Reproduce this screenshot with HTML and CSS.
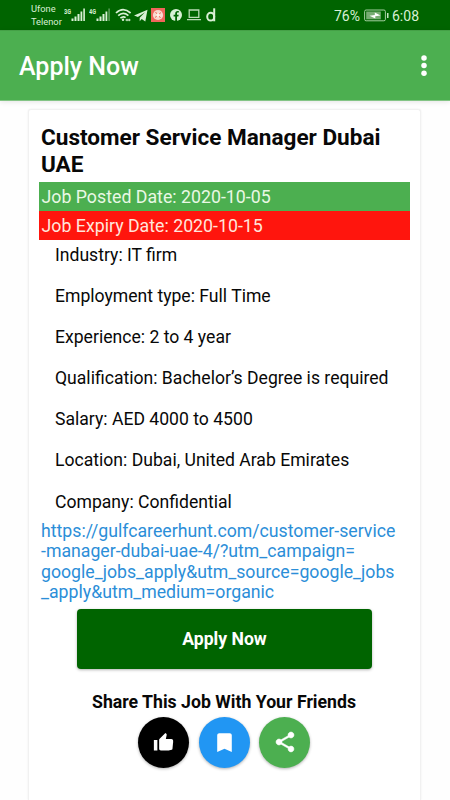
FILE: index.html
```html
<!DOCTYPE html>
<html lang="en">
<head>
<meta charset="utf-8">
<meta name="viewport" content="width=device-width, initial-scale=1">
<title>Apply Now</title>
<link rel="stylesheet" href="styles.css">
</head>
<body>
<div class="status">
  <div class="carriers"><span>Ufone</span><span>Telenor</span></div>
  <svg class="signal" width="22" height="16" viewBox="0 0 22 16" aria-hidden="true"><text x="0" y="6.6" class="net" textLength="7" lengthAdjust="spacingAndGlyphs">3G</text><path d="M7.500 11.500h2V14h-2zM10.500 9.500h2V14h-2zM13.500 7h2v7h-2zM16.500 4.500h1.800v9.500h-1.800zM19.300 1.500h1.600V14h-1.600z"/></svg>
  <svg class="signal second" width="22" height="16" viewBox="0 0 22 16" aria-hidden="true"><text x="0" y="6.6" class="net" textLength="7" lengthAdjust="spacingAndGlyphs">4G</text><path d="M7.500 11.500h2V14h-2zM10.500 9.500h2V14h-2zM13.500 7h2v7h-2zM16.500 4.500h1.800v9.500h-1.800z"/><path class="dim" d="M19.300 1.500h1.600V14h-1.600z"/></svg>
  <svg class="wifi" width="17" height="14" viewBox="0 0 17 14" aria-hidden="true"><path d="M1 5Q8-1.800 15.600 5M3.200 7.700Q8.200 3.200 13.400 7.700M5.400 10.200Q8.200 7.800 10.600 9.600"/><circle cx="8" cy="11.800" r="1.200"/><path class="arrows" d="M10.500 12h5M12 10.800v2.400M14.200 10.800v2.400"/></svg>
  <svg class="telegram" width="14" height="13" viewBox="0 0 14 13" aria-hidden="true"><path d="M13.500.7 0 6.500l3.900 1.600L11 3.300 5.700 8.800v3.400l2-2.100 3.600 2.400z"/></svg>
  <svg class="app" width="14" height="14" viewBox="0 0 14 14" aria-hidden="true"><rect width="14" height="14" fill="#ef665b"/><circle cx="7" cy="7" r="5.100" fill="#f9d9ce"/><path d="M4.500 4l2 2.500M10 4.500L7.500 6.500M4 9.500l2.500-2M9.500 10L8 8" stroke="#ef665b" stroke-width="1"/><circle cx="7" cy="7" r="1.700" fill="#fff3ea"/></svg>
  <svg class="facebook" width="12" height="12" viewBox="0 0 12 12" aria-hidden="true"><circle cx="6" cy="6" r="6"/><path class="cut" d="M5.200 12V7.600H3.600V5.800h1.600V4.600c0-1.700 1-2.600 2.500-2.600h1.100v1.600h-.9c-.7 0-.9.4-.9.900v1.300h1.700l-.3 1.800H7V12z"/></svg>
  <svg class="laptop" width="14" height="12" viewBox="0 0 14 12" aria-hidden="true"><path d="M2.200 1h9.600v7.400H2.200zM0 10.600h14"/></svg>
  <svg class="dlogo" width="10" height="14" viewBox="0 0 10 14" aria-hidden="true"><ellipse cx="4.700" cy="8.700" rx="3.500" ry="3.900"/><path d="M8.200.3V13.300"/></svg>
  <div class="right">
    <span class="percent">76%</span>
    <svg class="battery" width="25" height="13" viewBox="0 0 25 13" aria-hidden="true"><rect x=".6" y="1" width="20.800" height="10.800" rx="1.500" fill="none" stroke="#a4cea0"/><path d="M2.200 2.500h14.600v7.800H2.200z" fill="#77ad73"/><path d="M5.500 6.800l5.300-.7V3.600l5.700 2.800-5.200.9v2.200z" fill="#fff"/><path d="M23 4h1.500v5H23z" fill="#c4e3c0"/></svg>
    <span class="clock">6:08</span>
  </div>
</div>
<header class="appbar">
  <h1>Apply Now</h1>
  <svg width="6" height="22" viewBox="0 0 6 22" role="img" aria-label="Menu"><circle cx="3" cy="3" r="2.750"/><circle cx="3" cy="10.600" r="2.750"/><circle cx="3" cy="18.200" r="2.750"/></svg>
</header>
<main class="card">
  <h2>Customer Service Manager Dubai UAE</h2>
  <p class="date posted">Job Posted Date: 2020-10-05</p>
  <p class="date expiry">Job Expiry Date: 2020-10-15</p>
  <ul class="details">
    <li>Industry: IT firm</li>
    <li>Employment type: Full Time</li>
    <li>Experience: 2 to 4 year</li>
    <li>Qualification: Bachelor’s Degree is required</li>
    <li>Salary: AED 4000 to 4500</li>
    <li>Location: Dubai, United Arab Emirates</li>
    <li>Company: Confidential</li>
  </ul>
  <a class="link">https://gulfcareerhunt.com/customer-service<br>-manager-dubai-uae-4/?utm_campaign=<br>google_jobs_apply&amp;utm_source=google_jobs<br>_apply&amp;utm_medium=organic</a>
  <button class="apply">Apply Now</button>
  <h3>Share This Job With Your Friends</h3>
  <div class="actions">
    <button class="round like" aria-label="Like"><svg width="21" height="21" viewBox="0 0 24 24"><path d="M1 21h4V9H1v12zm22-11c0-1.100-.9-2-2-2h-6.310l.95-4.570.03-.32c0-.41-.17-.79-.44-1.060L14.170 1 7.590 7.590C7.220 7.950 7 8.450 7 9v10c0 1.100.9 2 2 2h9c.83 0 3.700-.2 4.200-1.220l.66-7.050c.09-.23.14-.47.14-.73v-2z"/></svg></button>
    <button class="round save" aria-label="Save"><svg width="25" height="25" viewBox="0 0 24 24"><path d="M17 3H7c-1.100 0-2 .9-2 2v16l7-3 7 3V5c0-1.100-.9-2-2-2z"/></svg></button>
    <button class="round share" aria-label="Share"><svg width="24" height="24" viewBox="0 0 24 24"><path stroke="#fff" stroke-width=".5" d="M18 16.080c-.76 0-1.440.3-1.960.77L8.910 12.700c.05-.23.09-.46.09-.7s-.04-.47-.09-.7l7.050-4.110c.54.5 1.250.81 2.040.81 1.660 0 3-1.340 3-3s-1.340-3-3-3-3 1.340-3 3c0 .24.040.47.090.7L8.040 9.810C7.500 9.310 6.790 9 6 9c-1.660 0-3 1.340-3 3s1.340 3 3 3c.79 0 1.500-.31 2.040-.81l7.120 4.160c-.05.21-.08.43-.08.65 0 1.610 1.310 2.920 2.920 2.920s2.920-1.310 2.920-2.920-1.310-2.920-2.920-2.920z"/></svg></button>
  </div>
</main>
</body>
</html>
```

FILE: styles.css
```css
* { box-sizing: border-box; }
html, body { margin: 0; height: 100%; overflow: hidden; }
body {
  display: flex;
  flex-direction: column;
  background: #fefefe;
  color: #080808;
  font-family: Roboto, "Liberation Sans", sans-serif;
}
h1, h2, h3, p, ul { margin: 0; padding: 0; }
svg { display: block; flex: none; }
button { border: 0; padding: 0; font-family: inherit; }

.status {
  flex: none;
  display: flex;
  align-items: center;
  height: 30px;
  padding: 0 31px 0 31px;
  background: #006400;
  color: #d9f0d5;
  fill: #d9f0d5;
}
.carriers {
  display: flex;
  flex-direction: column;
  width: 32px;
  font-size: 9.300px;
  line-height: 13px;
}
.net { font: 700 6.500px Roboto, sans-serif; }
.signal { margin-left: 1px; }
.second { margin-left: 3px; }
.dim { opacity: .4; }
.wifi { margin-left: 4px; }
.wifi path { fill: none; stroke: #d9f0d5; stroke-width: 1.700; }
.wifi .arrows { stroke-width: 1; }
.telegram { margin-left: 2px; }
.app { margin-left: 3px; }
.facebook { margin-left: 5px; }
.cut { fill: #006400; }
.laptop { margin-left: 5px; fill: none; stroke: #b9dab5; stroke-width: 1.300; }
.dlogo { margin-left: 5px; fill: none; stroke: #d9f0d5; stroke-width: 2; }
.right { display: flex; align-items: center; margin: 1px 0 0 auto; font-size: 14px; }
.battery { margin: 0 3px 0 4px; }

.appbar {
  flex: none;
  display: flex;
  align-items: center;
  justify-content: space-between;
  height: 71px;
  padding: 0 23.500px 0 19px;
  background: #4caf50;
  border-top: 1px solid #45a047;
  border-bottom: 1px solid #83c485;
  box-shadow: 0 1px 5px rgba(0, 0, 0, .1);
  color: #fff;
  fill: #fff;
}
h1 { padding-top: 3px; font-size: 25px; font-weight: 500; line-height: 30px; }

.card {
  flex: 1;
  display: flex;
  flex-direction: column;
  margin: 8px 29px 0 28px;
  padding: 15px 11px 0 10px;
  background: #fff;
  border: 1px solid #f1f1f1;
  border-bottom: 0;
  border-radius: 3px 3px 0 0;
  box-shadow: 0 0 2px rgba(0, 0, 0, .08);
}
h2 { padding-left: 2px; font-size: 22.560px; font-weight: 700; line-height: 26.500px; }
.date {
  width: 371px;
  height: 29px;
  padding-left: 2.500px;
  font-size: 17.750px;
  line-height: 30px;
  color: #e9f8e5;
}
.posted { margin-top: 4px; background: #4caf50; }
.expiry { background: #ff150d; color: #ffe5dc; }
.details { padding: 5px 0 0 16px; list-style: none; font-size: 17.600px; line-height: 20.500px; }
.details li + li { margin-top: 20.600px; }
.link {
  margin: 8.700px 0 0 2px;
  font-size: 17.700px;
  line-height: 20.500px;
  color: #2b8ed8;
  white-space: nowrap;
}
.apply {
  width: 295px;
  height: 60px;
  margin: 6px 0 0 38px;
  padding-top: 1px;
  border-radius: 4px;
  background: #006400;
  box-shadow: 0 1px 3px rgba(0, 0, 0, .3);
  color: #fff;
  font-size: 17.600px;
  font-weight: 700;
}
h3 { margin: 22px 0 0 53px; font-size: 17.700px; font-weight: 700; line-height: 22px; }
.actions { display: flex; gap: 9.500px; margin: 4px 0 0 99px; }
.round {
  display: flex;
  align-items: center;
  justify-content: center;
  width: 51px;
  height: 51px;
  border-radius: 50%;
  box-shadow: 0 1px 3px rgba(0, 0, 0, .3);
  fill: #fff;
}
.like { background: #000; }
.save { background: #2196f3; }
.share { background: #4caf50; }
```
